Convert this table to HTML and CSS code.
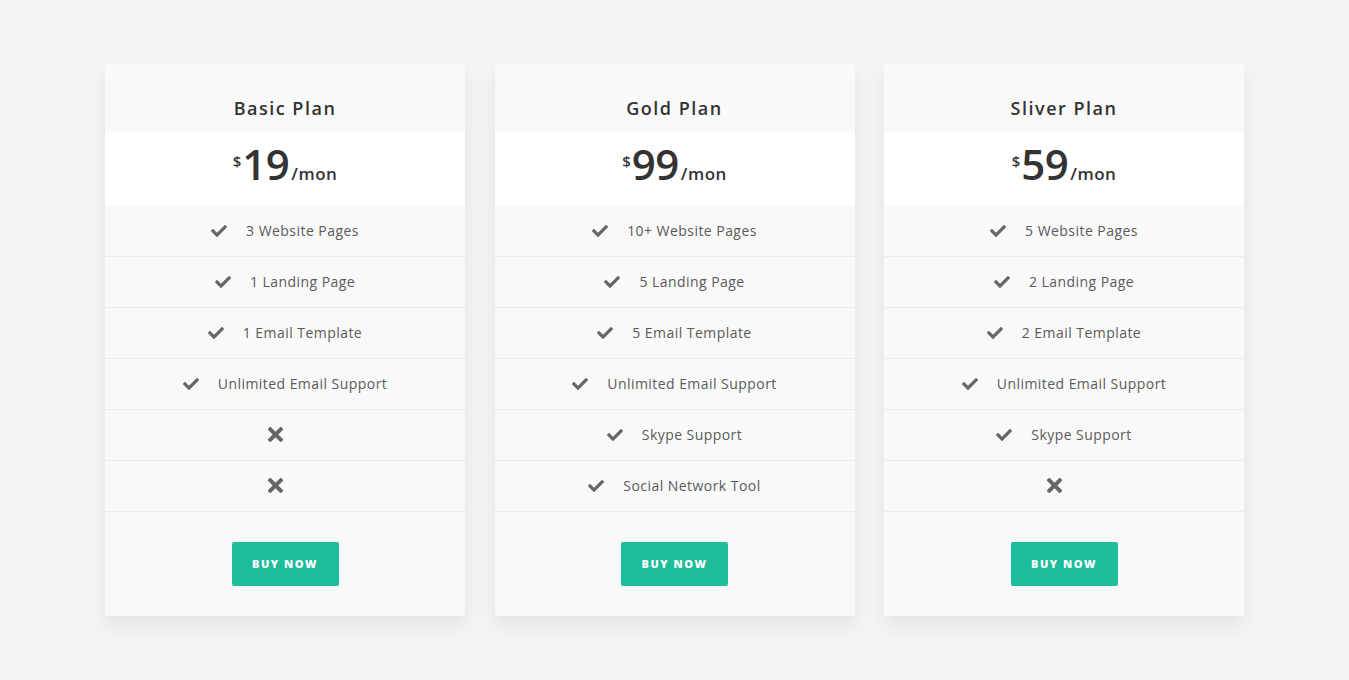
FILE: index.html
```html
<!DOCTYPE html>
<html>
<head>
<meta charset="utf-8">
<link rel="stylesheet" href="styles.css">
</head>
<body>
<div class="pricing">
  <div class="card">
    <h3 class="title">Basic Plan</h3>
    <div class="price"><span class="cur">$</span><span class="amt">19</span><span class="per">/mon</span></div>
    <ul class="features">
      <li><svg class="ic" viewBox="0 0 512 512"><path d="M173.9 439.4L7.5 273c-10-10-10-26.2 0-36.2l36.2-36.2c10-10 26.2-10 36.2 0L192 312.7 432.1 72.6c10-10 26.2-10 36.2 0l36.2 36.2c10 10 10 26.2 0 36.2L210.1 439.4c-10 10-26.2 10-36.2 0z"/></svg><span>3 Website Pages</span></li>
      <li><svg class="ic" viewBox="0 0 512 512"><path d="M173.9 439.4L7.5 273c-10-10-10-26.2 0-36.2l36.2-36.2c10-10 26.2-10 36.2 0L192 312.7 432.1 72.6c10-10 26.2-10 36.2 0l36.2 36.2c10 10 10 26.2 0 36.2L210.1 439.4c-10 10-26.2 10-36.2 0z"/></svg><span>1 Landing Page</span></li>
      <li><svg class="ic" viewBox="0 0 512 512"><path d="M173.9 439.4L7.5 273c-10-10-10-26.2 0-36.2l36.2-36.2c10-10 26.2-10 36.2 0L192 312.7 432.1 72.6c10-10 26.2-10 36.2 0l36.2 36.2c10 10 10 26.2 0 36.2L210.1 439.4c-10 10-26.2 10-36.2 0z"/></svg><span>1 Email Template</span></li>
      <li><svg class="ic" viewBox="0 0 512 512"><path d="M173.9 439.4L7.5 273c-10-10-10-26.2 0-36.2l36.2-36.2c10-10 26.2-10 36.2 0L192 312.7 432.1 72.6c10-10 26.2-10 36.2 0l36.2 36.2c10 10 10 26.2 0 36.2L210.1 439.4c-10 10-26.2 10-36.2 0z"/></svg><span>Unlimited Email Support</span></li>
      <li><svg class="ix" viewBox="0 80 352 352"><path d="M242.7 256l100.1-100.1c12.3-12.3 12.3-32.2 0-44.5l-22.2-22.2c-12.3-12.3-32.2-12.3-44.5 0L176 189.3 75.9 89.2c-12.3-12.3-32.2-12.3-44.5 0L9.2 111.4c-12.3 12.3-12.3 32.2 0 44.5L109.3 256 9.2 356.1c-12.3 12.3-12.3 32.2 0 44.5l22.2 22.2c12.3 12.3 32.2 12.3 44.5 0L176 322.7l100.1 100.1c12.3 12.3 32.2 12.3 44.5 0l22.2-22.2c12.3-12.3 12.3-32.2 0-44.5L242.7 256z"/></svg></li>
      <li><svg class="ix" viewBox="0 80 352 352"><path d="M242.7 256l100.1-100.1c12.3-12.3 12.3-32.2 0-44.5l-22.2-22.2c-12.3-12.3-32.2-12.3-44.5 0L176 189.3 75.9 89.2c-12.3-12.3-32.2-12.3-44.5 0L9.2 111.4c-12.3 12.3-12.3 32.2 0 44.5L109.3 256 9.2 356.1c-12.3 12.3-12.3 32.2 0 44.5l22.2 22.2c12.3 12.3 32.2 12.3 44.5 0L176 322.7l100.1 100.1c12.3 12.3 32.2 12.3 44.5 0l22.2-22.2c12.3-12.3 12.3-32.2 0-44.5L242.7 256z"/></svg></li>
    </ul>
    <div class="foot"><a class="btn" href="#">BUY NOW</a></div>
  </div>
  <div class="card">
    <h3 class="title">Gold Plan</h3>
    <div class="price"><span class="cur">$</span><span class="amt">99</span><span class="per">/mon</span></div>
    <ul class="features">
      <li><svg class="ic" viewBox="0 0 512 512"><path d="M173.9 439.4L7.5 273c-10-10-10-26.2 0-36.2l36.2-36.2c10-10 26.2-10 36.2 0L192 312.7 432.1 72.6c10-10 26.2-10 36.2 0l36.2 36.2c10 10 10 26.2 0 36.2L210.1 439.4c-10 10-26.2 10-36.2 0z"/></svg><span>10+ Website Pages</span></li>
      <li><svg class="ic" viewBox="0 0 512 512"><path d="M173.9 439.4L7.5 273c-10-10-10-26.2 0-36.2l36.2-36.2c10-10 26.2-10 36.2 0L192 312.7 432.1 72.6c10-10 26.2-10 36.2 0l36.2 36.2c10 10 10 26.2 0 36.2L210.1 439.4c-10 10-26.2 10-36.2 0z"/></svg><span>5 Landing Page</span></li>
      <li><svg class="ic" viewBox="0 0 512 512"><path d="M173.9 439.4L7.5 273c-10-10-10-26.2 0-36.2l36.2-36.2c10-10 26.2-10 36.2 0L192 312.7 432.1 72.6c10-10 26.2-10 36.2 0l36.2 36.2c10 10 10 26.2 0 36.2L210.1 439.4c-10 10-26.2 10-36.2 0z"/></svg><span>5 Email Template</span></li>
      <li><svg class="ic" viewBox="0 0 512 512"><path d="M173.9 439.4L7.5 273c-10-10-10-26.2 0-36.2l36.2-36.2c10-10 26.2-10 36.2 0L192 312.7 432.1 72.6c10-10 26.2-10 36.2 0l36.2 36.2c10 10 10 26.2 0 36.2L210.1 439.4c-10 10-26.2 10-36.2 0z"/></svg><span>Unlimited Email Support</span></li>
      <li><svg class="ic" viewBox="0 0 512 512"><path d="M173.9 439.4L7.5 273c-10-10-10-26.2 0-36.2l36.2-36.2c10-10 26.2-10 36.2 0L192 312.7 432.1 72.6c10-10 26.2-10 36.2 0l36.2 36.2c10 10 10 26.2 0 36.2L210.1 439.4c-10 10-26.2 10-36.2 0z"/></svg><span>Skype Support</span></li>
      <li><svg class="ic" viewBox="0 0 512 512"><path d="M173.9 439.4L7.5 273c-10-10-10-26.2 0-36.2l36.2-36.2c10-10 26.2-10 36.2 0L192 312.7 432.1 72.6c10-10 26.2-10 36.2 0l36.2 36.2c10 10 10 26.2 0 36.2L210.1 439.4c-10 10-26.2 10-36.2 0z"/></svg><span>Social Network Tool</span></li>
    </ul>
    <div class="foot"><a class="btn" href="#">BUY NOW</a></div>
  </div>
  <div class="card">
    <h3 class="title">Sliver Plan</h3>
    <div class="price"><span class="cur">$</span><span class="amt">59</span><span class="per">/mon</span></div>
    <ul class="features">
      <li><svg class="ic" viewBox="0 0 512 512"><path d="M173.9 439.4L7.5 273c-10-10-10-26.2 0-36.2l36.2-36.2c10-10 26.2-10 36.2 0L192 312.7 432.1 72.6c10-10 26.2-10 36.2 0l36.2 36.2c10 10 10 26.2 0 36.2L210.1 439.4c-10 10-26.2 10-36.2 0z"/></svg><span>5 Website Pages</span></li>
      <li><svg class="ic" viewBox="0 0 512 512"><path d="M173.9 439.4L7.5 273c-10-10-10-26.2 0-36.2l36.2-36.2c10-10 26.2-10 36.2 0L192 312.7 432.1 72.6c10-10 26.2-10 36.2 0l36.2 36.2c10 10 10 26.2 0 36.2L210.1 439.4c-10 10-26.2 10-36.2 0z"/></svg><span>2 Landing Page</span></li>
      <li><svg class="ic" viewBox="0 0 512 512"><path d="M173.9 439.4L7.5 273c-10-10-10-26.2 0-36.2l36.2-36.2c10-10 26.2-10 36.2 0L192 312.7 432.1 72.6c10-10 26.2-10 36.2 0l36.2 36.2c10 10 10 26.2 0 36.2L210.1 439.4c-10 10-26.2 10-36.2 0z"/></svg><span>2 Email Template</span></li>
      <li><svg class="ic" viewBox="0 0 512 512"><path d="M173.9 439.4L7.5 273c-10-10-10-26.2 0-36.2l36.2-36.2c10-10 26.2-10 36.2 0L192 312.7 432.1 72.6c10-10 26.2-10 36.2 0l36.2 36.2c10 10 10 26.2 0 36.2L210.1 439.4c-10 10-26.2 10-36.2 0z"/></svg><span>Unlimited Email Support</span></li>
      <li><svg class="ic" viewBox="0 0 512 512"><path d="M173.9 439.4L7.5 273c-10-10-10-26.2 0-36.2l36.2-36.2c10-10 26.2-10 36.2 0L192 312.7 432.1 72.6c10-10 26.2-10 36.2 0l36.2 36.2c10 10 10 26.2 0 36.2L210.1 439.4c-10 10-26.2 10-36.2 0z"/></svg><span>Skype Support</span></li>
      <li><svg class="ix" viewBox="0 80 352 352"><path d="M242.7 256l100.1-100.1c12.3-12.3 12.3-32.2 0-44.5l-22.2-22.2c-12.3-12.3-32.2-12.3-44.5 0L176 189.3 75.9 89.2c-12.3-12.3-32.2-12.3-44.5 0L9.2 111.4c-12.3 12.3-12.3 32.2 0 44.5L109.3 256 9.2 356.1c-12.3 12.3-12.3 32.2 0 44.5l22.2 22.2c12.3 12.3 32.2 12.3 44.5 0L176 322.7l100.1 100.1c12.3 12.3 32.2 12.3 44.5 0l22.2-22.2c12.3-12.3 12.3-32.2 0-44.5L242.7 256z"/></svg></li>
    </ul>
    <div class="foot"><a class="btn" href="#">BUY NOW</a></div>
  </div>
</div>
</body>
</html>
```

FILE: styles.css
```css
* { box-sizing: border-box; }
html, body { margin: 0; padding: 0; }
body {
  background: #f5f5f5;
  font-family: "Open Sans", "Liberation Sans", sans-serif;
  color: #555;
  height: 680px;
}
.pricing {
  display: grid;
  grid-template-columns: repeat(3, 360px);
  column-gap: 29.5px;
  justify-content: center;
  padding-top: 64px;
}
.card {
  background: #f9f9f9;
  box-shadow: 0 10px 20px rgba(0,0,0,0.08);
  text-align: center;
}
.title {
  margin: 0;
  height: 68px;
  padding-top: 32px;
  font-size: 18px;
  font-weight: 600;
  letter-spacing: 1.5px;
  color: #333;
  line-height: 24px;
}
.price {
  background: #fff;
  height: 74px;
  display: flex;
  justify-content: center;
  align-items: baseline;
  padding-top: 6px;
  color: #333;
}
.cur { font-size: 15px; font-weight: 600; align-self: flex-start; margin-top: 13px; margin-right: 1px; }
.amt { font-size: 42px; font-weight: 600; line-height: 52px; letter-spacing: -0.5px; }
.per { font-size: 17px; font-weight: 600; margin-left: 2px; letter-spacing: 0.5px; }
.features { list-style: none; margin: 0; padding: 0; }
.features li {
  height: 51px;
  border-bottom: 1px solid #ececec;
  display: flex;
  align-items: center;
  justify-content: center;
  padding-bottom: 1px;
  font-size: 14px;
  letter-spacing: 0.45px;
  color: #5a5a5a;
}
.ic { width: 16px; height: 16px; fill: #666; margin-right: 19px; flex: none; }
.ix { width: 15px; height: 15px; fill: #666; margin-right: 19px; flex: none; }
.foot { height: 104px; padding-top: 30px; }
.btn {
  display: inline-block;
  width: 107px;
  height: 44px;
  line-height: 44px;
  background: #1dbc9a;
  color: #fff;
  border-radius: 2px;
  font-size: 11px;
  font-weight: 800;
  letter-spacing: 1.5px;
  text-decoration: none;
}
```
